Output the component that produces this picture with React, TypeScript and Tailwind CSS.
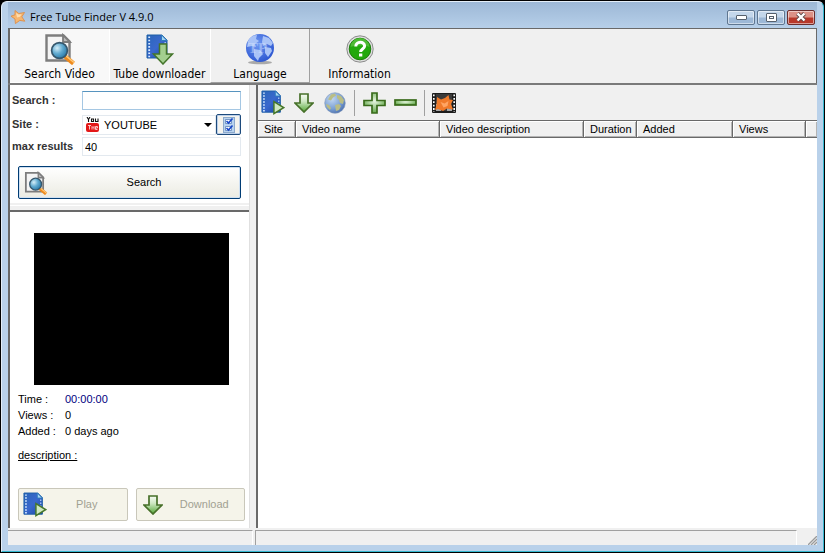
import { useState, type ReactNode } from 'react';
import clsx from 'clsx';

function StarIcon() {
  return (
    <svg viewBox="0 0 16 16" className="h-4 w-4">
      <path d="M5 1.500 8.800 4.500l5.700-1-2.700 4.300 3 4.400-5-.8L5.400 14.600 5 10 1 7.200l4-1.400z" fill="#f6b670" stroke="#dd8f4a" strokeWidth=".9" />
      <path d="M6 4l2.600 1.600 3-.4-1.600 2.600-3 .6z" fill="#ffdcab" />
    </svg>
  );
}

function SearchPageIcon({ className }: { className: string }) {
  return (
    <svg viewBox="0 0 32 32" className={className}>
      <defs>
        <radialGradient id="lensFill" cx=".35" cy=".35" r=".7">
          <stop offset="0" stopColor="#d5eef8" />
          <stop offset=".5" stopColor="#62abd0" />
          <stop offset="1" stopColor="#2778a8" />
        </radialGradient>
      </defs>
      <path d="M2.500 2.500h17l6 6v19h-23z" fill="#f4f4f4" stroke="#7d7d7d" strokeWidth="2.400" />
      <path d="M19 2v7h7z" fill="#bbb" stroke="#7d7d7d" strokeWidth="1.800" />
      <path d="m20.500 23 9 7.500" stroke="#ee8a1d" strokeWidth="4.400" />
      <path d="m21.500 22.500 8.500 7" stroke="#ffc977" strokeWidth="1.600" />
      <circle cx="15.500" cy="17.500" r="7.900" fill="url(#lensFill)" stroke="#37586d" strokeWidth="1.700" />
    </svg>
  );
}

function FilmShape() {
  return (
    <>
      <defs>
        <linearGradient id="filmFill" x1="0" y1="0" x2="1" y2="1">
          <stop offset="0" stopColor="#2a67b8" />
          <stop offset=".5" stopColor="#3a68cd" />
          <stop offset="1" stopColor="#1b48a4" />
        </linearGradient>
      </defs>
      <path d="M1 1h15l5 5v18H1z" fill="url(#filmFill)" stroke="#1d5ea6" />
      <path d="M3.200 2.500V24" stroke="#d9ecff" strokeWidth="1.800" strokeDasharray="1.600 1.600" />
      <path d="M19.200 8v16" stroke="#a9c9ef" strokeWidth="1.400" strokeDasharray="1.600 1.600" />
      <path d="M15.500 1v5.500H21z" fill="#a5d4f2" stroke="#2f7cbc" />
    </>
  );
}

function PlayFilmIcon({ className }: { className: string }) {
  return (
    <svg viewBox="0 0 26 28" className={className}>
      <FilmShape />
      <path d="M14 12.500v13l10.500-6.500z" fill="#cfe8c2" stroke="#47772a" strokeWidth="1.600" />
    </svg>
  );
}

function DownloadFilmIcon() {
  return (
    <svg viewBox="0 0 28 31" className="h-[31px] w-7">
      <FilmShape />
      <path d="M13.500 10h7v10h6l-9.500 10-9.500-10h6z" fill="#a3cf8f" stroke="#44752b" strokeWidth="1.500" />
    </svg>
  );
}

function DownArrowIcon() {
  return (
    <svg viewBox="0 0 20 20" className="h-5 w-5">
      <defs>
        <linearGradient id="arrowFill" x1="0" y1="0" x2="0" y2="1">
          <stop offset="0" stopColor="#f6fbf4" />
          <stop offset=".4" stopColor="#cfe8c4" />
          <stop offset="1" stopColor="#55a838" />
        </linearGradient>
      </defs>
      <path d="M6 1h8v9h5l-9 9-9-9h5z" fill="url(#arrowFill)" stroke="#47702a" strokeWidth="1.700" />
    </svg>
  );
}

function LanguageIcon() {
  return (
    <svg viewBox="0 0 30 32" className="h-8 w-[30px]">
      <defs>
        <radialGradient id="seaFill" cx=".4" cy=".35" r=".7">
          <stop offset="0" stopColor="#6f98f2" />
          <stop offset="1" stopColor="#2b55d0" />
        </radialGradient>
      </defs>
      <ellipse cx="15" cy="29.500" rx="12" ry="1.800" fill="#a9a9a9" />
      <circle cx="15" cy="15" r="14" fill="url(#seaFill)" />
      <path d="M3 8c2-4 6-6 9-6l-1 4 3 2-4 3 1 3-4-1-5 1zM9 16l6 1 3 4-4 4-1 3-4-5zM18 3l6 2 4 5-2 3-4-2-4 2-1-4zM20 14l6 1 1 3-4 6-3-4z" fill="#a9c3f7" />
      <text x="3" y="20" fontFamily="Liberation Serif" fontSize="15" fontWeight="bold" fill="#dbe7ff" opacity=".45">TP</text>
    </svg>
  );
}

function WorldIcon() {
  return (
    <svg viewBox="0 0 22 22" className="h-[22px] w-[22px]">
      <defs>
        <radialGradient id="worldFill" cx=".35" cy=".3" r=".8">
          <stop offset="0" stopColor="#c3d8f2" />
          <stop offset=".6" stopColor="#7ba0d4" />
          <stop offset="1" stopColor="#4468a8" />
        </radialGradient>
      </defs>
      <circle cx="11" cy="11" r="10.300" fill="url(#worldFill)" stroke="#8298bb" strokeWidth=".6" />
      <path d="M7 2.500l4-1 1 2-3 2-2 3-3-1zM2 12l3 1 2 3-1 2-3-3zM13 3l4 1 3 4-1 4-3-1-1-3-2-2zM11 13l4-1 2 2-2 4-3 1z" fill="#b9bd85" />
    </svg>
  );
}

function HelpIcon() {
  return (
    <svg viewBox="0 0 28 28" className="h-7 w-7">
      <circle cx="14" cy="14" r="13.200" fill="#dedede" stroke="#8c8c8c" />
      <circle cx="14" cy="14" r="10.800" fill="#22a80c" stroke="#1c7d0c" />
      <path d="M4.500 12a9.500 9 0 0 1 19 0c-5-2-13-2-19 0z" fill="#4cbb33" />
      <path d="M9.800 11.500c0-5.500 8.800-5.500 8.800-.5 0 3-4 3-4 6" fill="none" stroke="#fff" strokeWidth="3" />
      <rect x="13" y="18.500" width="3.300" height="3" fill="#fff" />
    </svg>
  );
}

function PlusIcon() {
  return (
    <svg viewBox="0 0 23 22" className="h-[22px] w-[23px]">
      <defs>
        <radialGradient id="plusFill" cx=".5" cy=".4" r=".6">
          <stop offset="0" stopColor="#e9f6e3" />
          <stop offset="1" stopColor="#62a849" />
        </radialGradient>
      </defs>
      <path d="M9 1h5v7.500h8v5h-8V21H9v-7.500H1v-5h8z" fill="url(#plusFill)" stroke="#3a6b1c" strokeWidth="1.700" />
    </svg>
  );
}

function MinusIcon() {
  return (
    <svg viewBox="0 0 23 7" className="h-[7px] w-[23px]">
      <rect x="1" y="1" width="21" height="5" fill="url(#plusFill)" stroke="#3a6b1c" strokeWidth="1.700" />
    </svg>
  );
}

function ConverterIcon() {
  return (
    <svg viewBox="0 0 24 20" className="h-5 w-6">
      <rect width="24" height="20" rx="1" fill="#1d1d1d" />
      <path d="M1.800 1.500V19M22.200 1.500V19" stroke="#fff" strokeWidth="1.600" strokeDasharray="1.800 1.600" />
      <path d="M4 1h16v17H4z" fill="#3a3a3a" />
      <path d="M4 11h5v7H4zM15 14h5v4h-5z" fill="#a5a5a5" />
      <path d="m5 4 4 2.500 4-1.500 3.500-3 1 4.500 3.500.5-2 4 2 5.500-6-1-4 2.500-5-2-3 1 1.500-5z" fill="#f07a2a" />
      <path d="m8.500 9 4 1.500 4-2.500-1 5-4 1.500z" fill="#ffa564" />
    </svg>
  );
}

function YouTubeIcon() {
  return (
    <svg viewBox="0 0 13 15" className="h-[15px] w-[13px]">
      <path d="m1 0 1.500 2.500L4 0M2.500 2.500V5M5.500 2h2v2.500h-2zM9.500 1.500v3H12v-3" fill="none" stroke="#111" strokeWidth="1.100" />
      <rect y="6" width="13" height="9" rx="2" fill="#e31818" />
      <path d="M2 8.500h3M3.500 8.500v4M6 12.500V9.500l1 1 1-1v3M9.500 11h2V9.500h-2v3h2" fill="none" stroke="#ffd5d5" strokeWidth=".9" />
    </svg>
  );
}

function ChecklistIcon() {
  return (
    <svg viewBox="0 0 12 16" className="h-4 w-3">
      <rect x=".5" y=".5" width="11" height="15" fill="#b9d3ef" stroke="#8ca9cb" />
      <path d="M2.500 2.500h6v4h-6zM2.500 9.500h6v4h-6z" fill="#fff" stroke="#5c82b8" strokeWidth=".8" />
      <path d="m3.500 4 2 2 4-4.500M3.500 11l2 2 4-4.500" fill="none" stroke="#1746c8" strokeWidth="1.600" />
    </svg>
  );
}

const tabs = [
  { label: 'Search Video', icon: <SearchPageIcon className="h-8 w-8" /> },
  { label: 'Tube downloader', icon: <DownloadFilmIcon /> },
  { label: 'Language', icon: <LanguageIcon /> },
  { label: 'Information', icon: <HelpIcon /> },
];

const columns = [
  { label: 'Site', width: 'w-[38px]' },
  { label: 'Video name', width: 'w-36' },
  { label: 'Video description', width: 'w-36' },
  { label: 'Duration', width: 'w-[53px]' },
  { label: 'Added', width: 'w-24' },
  { label: 'Views', width: 'w-[73px]' },
  { label: '', width: '' },
];

const details = [
  { label: 'Time :', value: '00:00:00', color: 'text-[#000080]' },
  { label: 'Views :', value: '0', color: 'text-black' },
  { label: 'Added :', value: '0 days ago', color: 'text-black' },
];

function TitleButton({ label, danger, children }: { label: string; danger?: boolean; children: ReactNode }) {
  return (
    <button
      aria-label={label}
      className={clsx(
        'flex h-[15px] w-7 items-center justify-center rounded-xs border shadow-[inset_0_0_0_1px_#ffffff80]',
        danger
          ? 'border-[#6b2d2d] bg-linear-to-b from-[#dc9186] from-45% to-[#b8382a] to-55%'
          : 'border-[#5f7690] bg-linear-to-b from-[#c4d7eb] from-45% to-[#9db8d6] to-55%',
      )}
    >
      {children}
    </button>
  );
}

function TitleBar() {
  return (
    <header className="flex h-[26px] items-center bg-linear-to-b from-[#9db8d6] to-[#b6cfe9] px-[2px] pt-1">
      <StarIcon />
      <h1 className="ml-1 flex-1 font-['Open_Sans',sans-serif] text-[11px] leading-4">Free Tube Finder V 4.9.0</h1>
      <div className="flex gap-[2px]">
        <TitleButton label="Minimize">
          <span className="h-[5px] w-[11px] rounded-[1px] border border-[#56606c] bg-white" />
        </TitleButton>
        <TitleButton label="Maximize">
          <span className="flex h-[9px] w-[11px] items-center justify-center rounded-[1px] border border-[#56606c] bg-white">
            <span className="h-[3px] w-[5px] border border-[#56606c]" />
          </span>
        </TitleButton>
        <TitleButton label="Close" danger>
          <svg viewBox="0 0 12 10" className="h-[10px] w-3">
            <path d="m2.500 1.500 7 7m0-7-7 7" stroke="#5d4848" strokeWidth="4" />
            <path d="m2.500 1.500 7 7m0-7-7 7" stroke="#fff" strokeWidth="2.400" />
          </svg>
        </TitleButton>
      </div>
    </header>
  );
}

function SearchForm() {
  const [query, setQuery] = useState('');
  const [max, setMax] = useState('40');
  const labelClass = 'w-[70px] shrink-0 font-bold text-[#333]';

  return (
    <form className="flex flex-col bg-white pt-[6px] pr-2 pb-1 pl-[2px]" onSubmit={(e) => e.preventDefault()}>
      <div className="flex h-[19px] items-center">
        <label htmlFor="query" className={labelClass}>Search :</label>
        <input
          id="query"
          value={query}
          onChange={(e) => setQuery(e.target.value)}
          className="h-full w-full min-w-0 border border-[#a5c7e3] border-t-[#5794bf] px-[3px] outline-none"
        />
      </div>
      <div className="mt-1 flex h-[21px] items-center">
        <label htmlFor="site" className={labelClass}>Site :</label>
        <div className="relative h-5 flex-1">
          <select id="site" className="h-full w-full appearance-none border border-[#e3e9ef] bg-white pl-[21px] leading-4">
            <option>YOUTUBE</option>
          </select>
          <span className="pointer-events-none absolute inset-y-0 left-1 flex items-center"><YouTubeIcon /></span>
          <svg viewBox="0 0 8 4" className="pointer-events-none absolute top-2 right-1 h-1 w-2"><path d="M0 0h8L4 4z" /></svg>
        </div>
        <button type="button" aria-label="Select sites" className="flex h-[21px] w-[25px] items-center justify-center rounded-xs border border-[#1d4a7c] bg-[#f4f3ee] shadow-[inset_0_0_0_1px_#bcd0ea]">
          <ChecklistIcon />
        </button>
      </div>
      <div className="mt-[2px] flex h-[19px] items-center">
        <label htmlFor="max" className={labelClass}>max results</label>
        <input
          id="max"
          value={max}
          onChange={(e) => setMax(e.target.value)}
          className="h-full w-full min-w-0 border border-[#e3e9ef] px-[2px] outline-none"
        />
      </div>
      <button className="mt-[10px] ml-[6px] flex h-[33px] shrink-0 items-center rounded-xs border border-[#003c74] bg-linear-to-b from-white to-[#ebebe2] pl-[5px] shadow-[inset_0_0_0_1px_#cfe0f2]">
        <SearchPageIcon className="h-6 w-6" />
        <span className="flex-1">Search</span>
      </button>
    </form>
  );
}

function Preview() {
  const buttonClass = 'flex h-[33px] flex-1 items-center rounded-xs border border-[#c9c7ba] bg-[#f5f4ea] pl-1 text-[#a1a192]';

  return (
    <section className="flex flex-1 flex-col border-t-2 border-[#696969] bg-white px-2 pt-[21px] pb-[7px]">
      <div className="mr-3 ml-4 h-[152px] bg-black" />
      <dl className="mt-[6px] leading-4">
        {details.map((item) => (
          <div key={item.label} className="flex">
            <dt className="w-[47px]">{item.label}</dt>
            <dd className={item.color}>{item.value}</dd>
          </div>
        ))}
      </dl>
      <p className="mt-2 leading-4 underline">description :</p>
      <div className="mt-auto -mr-1 flex gap-2">
        <button disabled className={buttonClass}>
          <PlayFilmIcon className="h-[26px] w-6" />
          <span className="flex-1">Play</span>
        </button>
        <button disabled className={buttonClass}>
          <span className="px-[2px]"><DownArrowIcon /></span>
          <span className="flex-1">Download</span>
        </button>
      </div>
    </section>
  );
}

function Results() {
  return (
    <section className="min-w-0 flex-1 border-l-2 border-[#696969] bg-white">
      <div className="flex h-[35px] items-center bg-[#f0f0f0] pl-[3px]">
        <button aria-label="Play"><PlayFilmIcon className="h-[26px] w-6" /></button>
        <button aria-label="Download" className="ml-[9px]"><DownArrowIcon /></button>
        <button aria-label="Open web page" className="ml-[10px]"><WorldIcon /></button>
        <div className="ml-2 h-[26px] border-l border-[#a0a0a0]" />
        <button aria-label="Add" className="ml-2"><PlusIcon /></button>
        <button aria-label="Remove" className="ml-2"><MinusIcon /></button>
        <div className="ml-[7px] h-[26px] border-l border-[#a0a0a0]" />
        <button aria-label="Convert" className="ml-[7px]"><ConverterIcon /></button>
      </div>
      <table className="w-full table-fixed border-separate border-spacing-0">
        <thead>
          <tr>
            {columns.map((column) => (
              <th
                key={column.label}
                scope="col"
                className={clsx(
                  'h-[18px] border-t border-r border-b border-[#696969] bg-[#f0f0f0] px-[6px] text-left leading-4 font-normal whitespace-nowrap shadow-[inset_1px_1px_0_#fff,inset_-1px_-1px_0_#b4b4b4] last:border-r-0',
                  column.width,
                )}
              >
                {column.label}
              </th>
            ))}
          </tr>
        </thead>
        <tbody />
      </table>
    </section>
  );
}

export default function App() {
  const [active, setActive] = useState('Search Video');

  return (
    <div className="flex min-h-screen flex-col bg-black font-['Liberation_Sans',sans-serif] text-[11px] text-black">
      <div className="m-px flex flex-1 flex-col rounded-t-md border border-t-[#e4eef8] border-r-[#35b8d0] border-b-[#35b8d0] border-l-[#e4eef8] bg-[#b9d1ea] px-[6px] pb-[6px]">
        <TitleBar />
        <nav className="flex h-[55px] shrink-0 border-t border-r border-l-2 border-[#696969] bg-[#f0f0f0]">
          {tabs.map((tab) => (
            <button
              key={tab.label}
              onClick={() => setActive(tab.label)}
              className={clsx(
                "flex w-[100px] flex-col items-center justify-between border-r border-b pt-1 font-['DejaVu_Sans_Condensed','DejaVu_Sans',sans-serif] text-[12px] leading-4",
                tab.label === active && 'border-white bg-[#f8f8f8]',
                tab.label !== active && tab.label !== 'Language' && 'border-transparent',
                tab.label === 'Language' && 'border-l border-r-[#a0a0a0] border-b-[#a0a0a0] border-l-white',
              )}
            >
              <span className="flex h-8 items-center">{tab.icon}</span>
              <span className="whitespace-nowrap">{tab.label}</span>
            </button>
          ))}
        </nav>
        <main className="flex flex-1 border-t-2 border-[#7a7a7a] bg-[#f0f0f0]">
          <aside className="flex w-[241px] shrink-0 flex-col border-l-2 border-[#696969]">
            <SearchForm />
            <div className="mt-[2px] mb-px h-1 border-t border-white bg-[#f0f0f0]" />
            <Preview />
          </aside>
          <div className="w-[7px] shrink-0 border-l border-[#e0e0e0] bg-[#f0f0f0]" />
          <Results />
        </main>
        <footer className="flex h-[17px] shrink-0 gap-[2px] bg-[#f0f0f0] pt-[2px]">
          <div className="w-[245px] border-t border-r border-t-[#a0a0a0] border-r-white" />
          <div className="flex-1 border-t border-r border-l border-t-[#a0a0a0] border-r-white border-l-[#a0a0a0]" />
          <div className="flex w-[18px] items-end justify-end">
            <svg viewBox="0 0 9 9" className="h-[9px] w-[9px]">
              <path d="m0 9 9-9M3 9l6-6M6 9l3-3" stroke="#9a9a9a" strokeWidth="1.300" />
            </svg>
          </div>
        </footer>
      </div>
    </div>
  );
}
